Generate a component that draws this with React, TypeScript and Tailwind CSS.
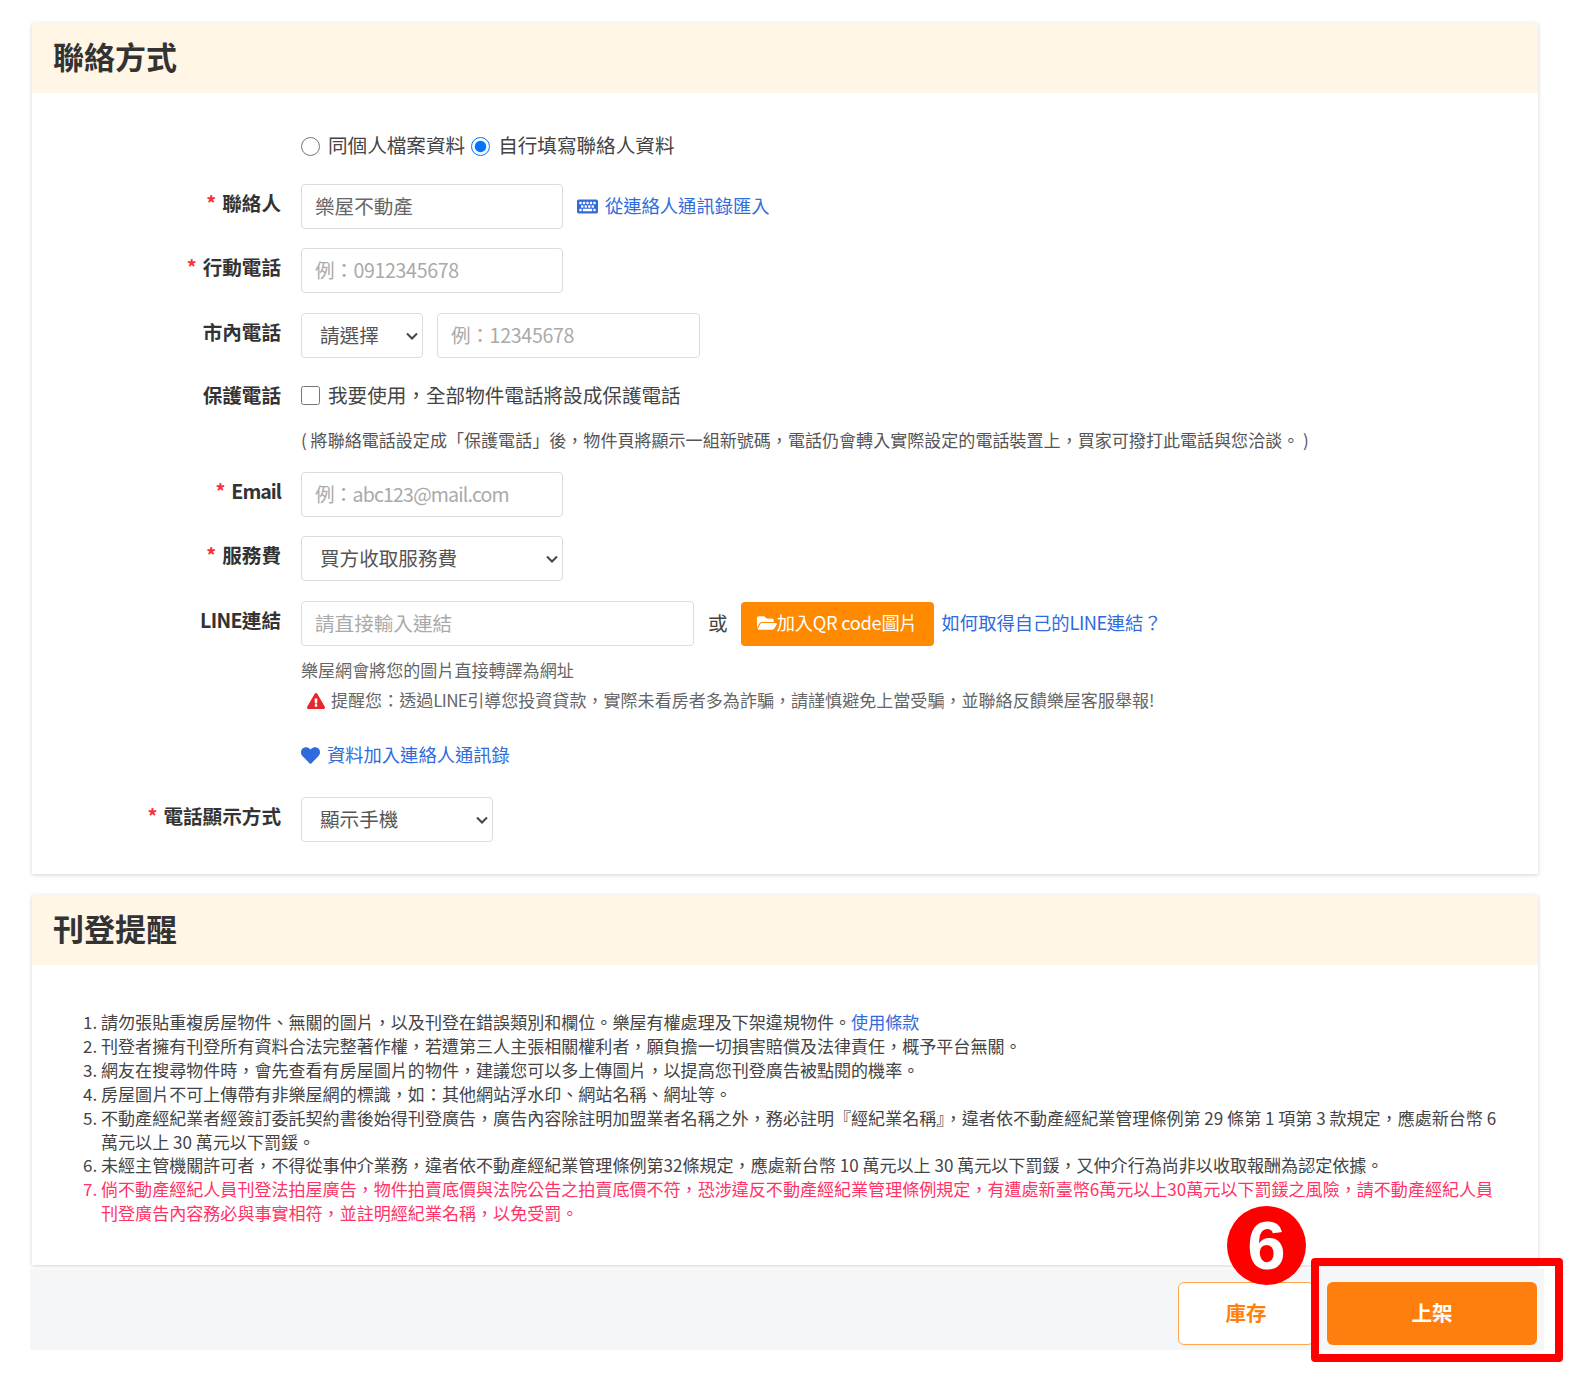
import type { ReactNode } from 'react';
import { FaExclamationTriangle, FaFolderOpen, FaHeart, FaKeyboard } from 'react-icons/fa';

const inputClass =
  'h-[45px] rounded-[4px] border border-[#dcdcdc] bg-white px-[13px] pb-[2px] text-[19.6px] text-[#666] placeholder:text-[#aaa] outline-none';

const Row = ({ label, required, children, className }: { label?: ReactNode; required?: boolean; children: ReactNode; className?: string }) => (
  <div className={`flex ${className ?? ''}`}>
    <div className="w-[249px] shrink-0 pt-[2px] text-right text-[19.6px] leading-[33px] font-bold text-[#333]">
      {required && <span className="mr-[6px] text-[#ff2d3a]">*</span>}
      {label}
    </div>
    <div className="ml-[20px] flex min-w-0 flex-1 items-center">{children}</div>
  </div>
);

const Select = ({ value, className }: { value: string; className: string }) => (
  <div className={`relative h-[45px] ${className}`}>
    <select className="h-full w-full appearance-none rounded-[4px] border border-[#dcdcdc] bg-white pb-[2px] pl-[18px] text-[19.6px] text-[#555] outline-none">
      <option>{value}</option>
    </select>
    <svg viewBox="0 0 12 8" className="pointer-events-none absolute top-[19px] right-[5px] h-[8px] w-[12px]" fill="none" stroke="#444" strokeWidth="2">
      <path d="M1 1.5l5 5 5-5" />
    </svg>
  </div>
);

const CardHeader = ({ title }: { title: string }) => (
  <div className="flex h-[70px] items-center bg-[#fff6e5] pb-[3px] pl-[21px] text-[31px] font-bold text-[#333]">{title}</div>
);

const notices = [
  '刊登者擁有刊登所有資料合法完整著作權，若遭第三人主張相關權利者，願負擔一切損害賠償及法律責任，概予平台無關。',
  '網友在搜尋物件時，會先查看有房屋圖片的物件，建議您可以多上傳圖片，以提高您刊登廣告被點閱的機率。',
  '房屋圖片不可上傳帶有非樂屋網的標識，如：其他網站浮水印、網站名稱、網址等。',
  '不動產經紀業者經簽訂委託契約書後始得刊登廣告，廣告內容除註明加盟業者名稱之外，務必註明『經紀業名稱』，違者依不動產經紀業管理條例第 29 條第 1 項第 3 款規定，應處新台幣 6 萬元以上 30 萬元以下罰鍰。',
  '未經主管機關許可者，不得從事仲介業務，違者依不動產經紀業管理條例第32條規定，應處新台幣 10 萬元以上 30 萬元以下罰鍰，又仲介行為尚非以收取報酬為認定依據。',
];

export default function App() {
  return (
    <div className="relative h-[1382px] w-[1576px] overflow-hidden bg-white pt-[23px] pl-[30px] font-['Noto_Sans_CJK_TC','Noto_Sans',sans-serif]">
      <section className="mr-[38px] ml-[2px] h-[851px] bg-white shadow-[0_1px_4px_rgba(0,0,0,0.18)]">
        <CardHeader title="聯絡方式" />
        <div className="pt-[38px]">
          <Row className="h-[30px]">
            <label className="flex items-center text-[19.6px] text-[#444]">
              <input type="radio" name="contact" className="mr-[8px] h-[19px] w-[19px]" />
              <span className="pb-[2px]">同個人檔案資料</span>
            </label>
            <label className="ml-[6px] flex items-center text-[19.6px] text-[#444]">
              <input type="radio" name="contact" defaultChecked className="mr-[8px] h-[19px] w-[19px]" />
              <span className="pb-[2px]">自行填寫聯絡人資料</span>
            </label>
          </Row>
          <Row label="聯絡人" required className="mt-[23px]">
            <input className={`${inputClass} w-[262px]`} defaultValue="樂屋不動產" />
            <a href="#" className="ml-[14px] flex items-center text-[18.3px] text-[#2f6bdd]">
              <FaKeyboard className="mr-[7px] text-[21px]" />
              <span className="pb-[1px]">從連絡人通訊錄匯入</span>
            </a>
          </Row>
          <Row label="行動電話" required className="mt-[19px]">
            <input className={`${inputClass} w-[262px] tracking-[-0.35px]`} placeholder="例：0912345678" />
          </Row>
          <Row label="市內電話" className="mt-[20px]">
            <Select value="請選擇" className="w-[122px]" />
            <input className={`${inputClass} ml-[14px] w-[263px] tracking-[-0.3px]`} placeholder="例：12345678" />
          </Row>
          <Row label="保護電話" className="mt-[18px] h-[39px]">
            <label className="flex items-center text-[19.6px] text-[#444]">
              <input type="checkbox" className="mr-[8px] h-[19px] w-[19px]" />
              <span className="pb-[1px]">我要使用，全部物件電話將設成保護電話</span>
            </label>
          </Row>
          <Row className="mt-[9px] h-[34px]">
            <span className="pb-[2px] text-[17.06px] text-[#555]">( 將聯絡電話設定成「保護電話」後，物件頁將顯示一組新號碼，電話仍會轉入實際設定的電話裝置上，買家可撥打此電話與您洽談。 )</span>
          </Row>
          <Row label={<span className="tracking-[-1px]">Email</span>} required className="mt-[14px]">
            <input className={`${inputClass} w-[262px] tracking-[-0.85px]`} placeholder="例：abc123@mail.com" />
          </Row>
          <Row label="服務費" required className="mt-[19px]">
            <Select value="買方收取服務費" className="w-[262px]" />
          </Row>
          <Row label={<><span className="tracking-[-0.7px]">LINE</span>連結</>} className="mt-[20px]">
            <input className={`${inputClass} w-[393px]`} placeholder="請直接輸入連結" />
            <span className="ml-[14px] pb-[2px] text-[19.6px] text-[#444]">或</span>
            <button className="ml-[13px] flex h-[44px] w-[193px] items-center justify-center rounded-[4px] bg-[#ff8a00] pb-[2px] text-[18.3px] tracking-[-0.3px] text-white">
              <FaFolderOpen className="text-[20px]" />
              加入QR code圖片
            </button>
            <a href="#" className="ml-[8px] pb-[2px] text-[18.3px] text-[#2f6bdd]">如何取得自己的<span className="tracking-[-0.5px]">LINE</span>連結？</a>
          </Row>
          <Row className="mt-[10px] h-[30px]">
            <span className="pb-[2px] text-[17.06px] text-[#666]">樂屋網會將您的圖片直接轉譯為網址</span>
          </Row>
          <Row className="h-[30px]">
            <span className="flex items-center pl-[6px] text-[17.06px] text-[#666]">
              <FaExclamationTriangle className="mr-[6px] text-[18px] text-[#e8242c]" />
              <span className="pb-[2px]">提醒您：透過<span className="tracking-[-0.7px]">LINE</span>引導您投資貸款，實際未看房者多為詐騙，請謹慎避免上當受騙，並聯絡反饋樂屋客服舉報!</span>
            </span>
          </Row>
          <Row className="mt-[24px] h-[30px]">
            <a href="#" className="flex items-center text-[18.3px] text-[#2f6bdd]">
              <FaHeart className="mr-[7px] text-[19px]" />
              資料加入連絡人通訊錄
            </a>
          </Row>
          <Row label="電話顯示方式" required className="mt-[27px]">
            <Select value="顯示手機" className="w-[192px]" />
          </Row>
        </div>
      </section>

      <section className="mt-[21px] mr-[38px] ml-[2px] h-[370px] bg-white shadow-[0_1px_4px_rgba(0,0,0,0.18)]">
        <CardHeader title="刊登提醒" />
        <ol className="list-decimal pt-[45px] pr-[38px] pl-[69px] text-[17.06px] leading-[23.9px] text-[#444]">
          <li>
            請勿張貼重複房屋物件、無關的圖片，以及刊登在錯誤類別和欄位。樂屋有權處理及下架違規物件。
            <a href="#" className="text-[#2f6bdd]">使用條款</a>
          </li>
          {notices.map((text) => (
            <li key={text}>{text}</li>
          ))}
          <li className="text-[#ff3366]">
            倘不動產經紀人員刊登法拍屋廣告，物件拍賣底價與法院公告之拍賣底價不符，恐涉違反不動產經紀業管理條例規定，有遭處新臺幣6萬元以上30萬元以下罰鍰之風險，請不動產經紀人員刊登廣告內容務必與事實相符，並註明經紀業名稱，以免受罰。
          </li>
        </ol>
      </section>

      <div className="mt-[4px] flex h-[81px] w-[1514px] justify-end bg-[#f5f6f8] pt-[13px] pr-[7px]">
        <button className="h-[63px] w-[136px] rounded-[6px] border border-[#ffa64d] bg-white pb-[2px] text-[20.5px] font-bold text-[#ff7f0e]">庫存</button>
        <button className="ml-[13px] h-[63px] w-[210px] rounded-[6px] bg-[#ff7f0e] pb-[2px] text-[20.5px] font-bold text-white">上架</button>
      </div>

      {/* annotation over the screenshot */}
      <div className="absolute top-[1258px] left-[1311px] h-[104px] w-[252px] rounded-[4px] border-[8px] border-[#ff0000]" />
      <div className="absolute top-[1206px] left-[1227px] flex h-[79px] w-[79px] items-center justify-center rounded-full bg-[#ff0000] font-['Liberation_Sans',sans-serif] text-[69px] leading-none font-bold text-white">6</div>
    </div>
  );
}
